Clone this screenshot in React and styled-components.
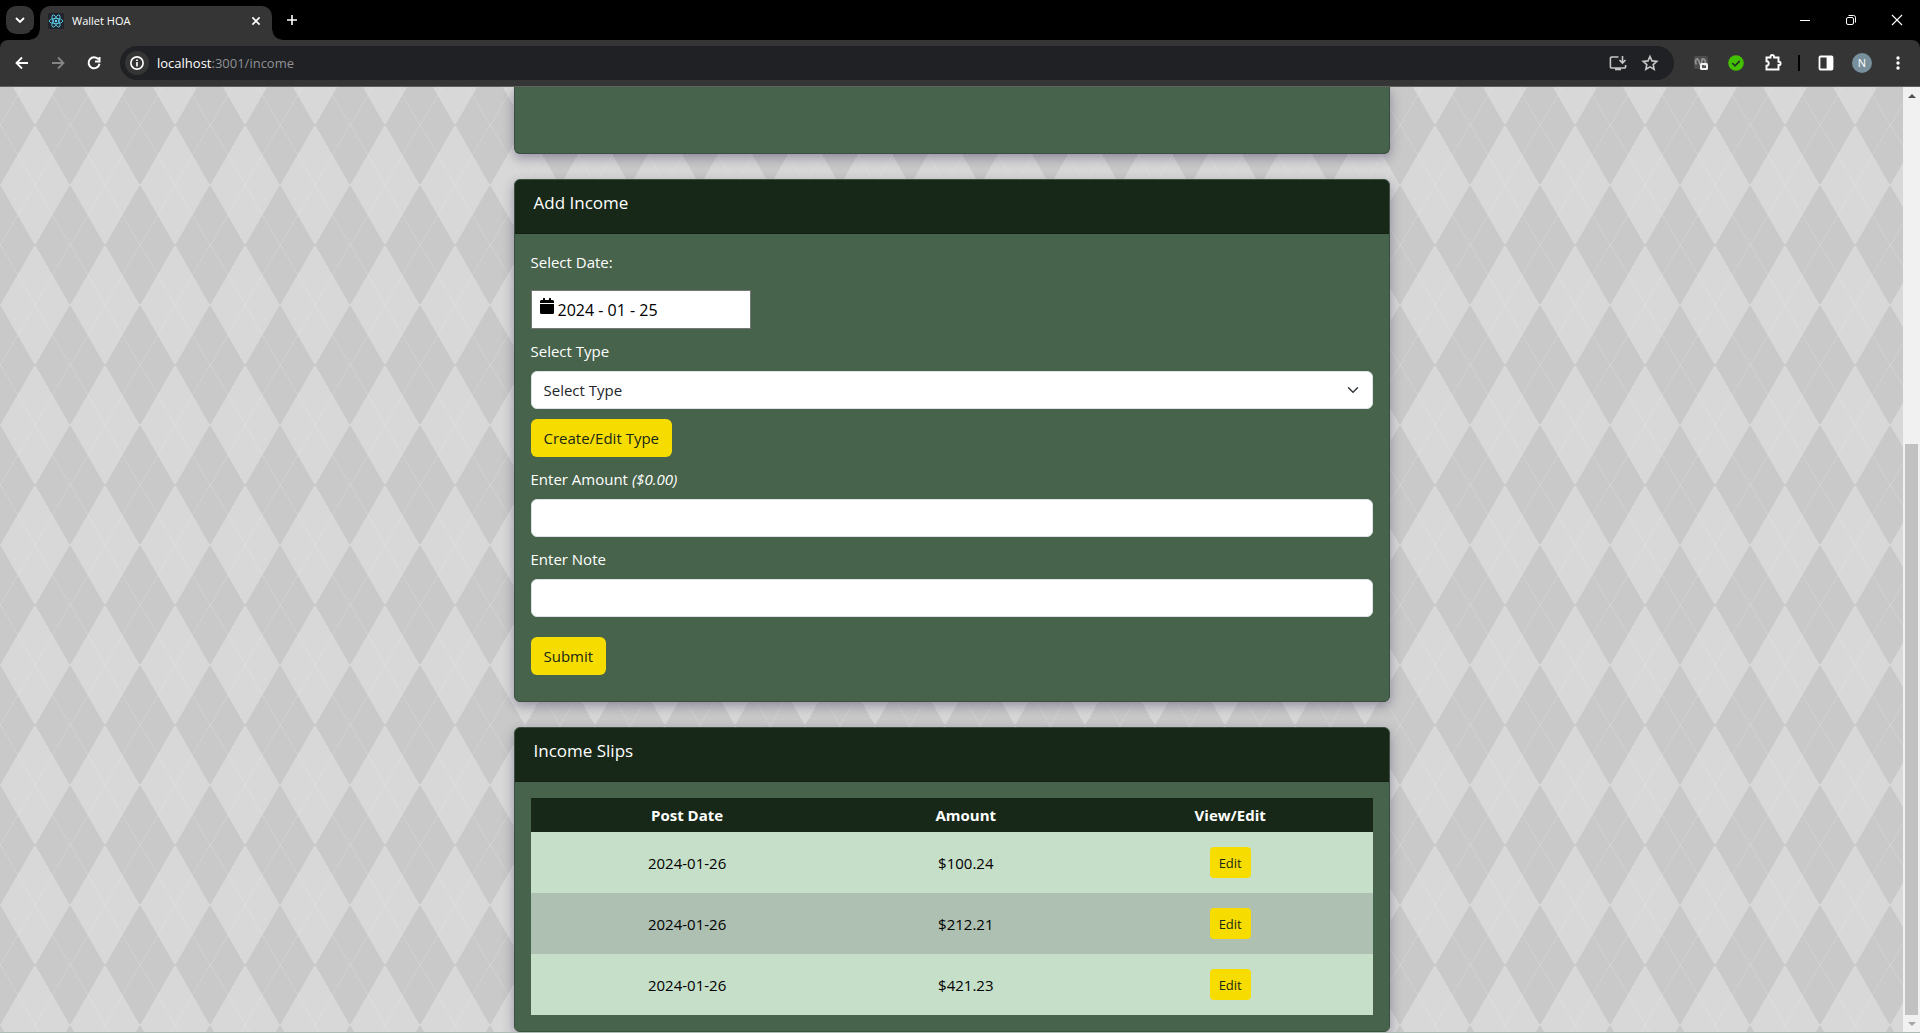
import React from "react";
import styled, { createGlobalStyle } from "styled-components";

const GlobalStyle = createGlobalStyle`
  *, *::before, *::after { box-sizing: border-box; }
  html, body, #root { height: 100%; }
  body {
    margin: 0;
    font-family: "Segoe UI", "Open Sans", "Noto Sans", sans-serif;
    font-size: 15px;
    line-height: 24px;
    color: #fff;
    background: #000;
    overflow: hidden;
  }
  button, input, select { font: inherit; }
`;

const Window = styled.div`
  display: grid;
  grid-template-rows: 40px 47px 1fr;
  height: 100vh;
  min-height: 600px;
`;

const TabStrip = styled.header`
  display: flex;
  align-items: flex-start;
  padding: 6px 0 0 6px;
  background: #000;
`;

const PlainButton = styled.button`
  display: grid;
  place-items: center;
  flex: none;
  width: ${(p) => p.$w || 28}px;
  height: 28px;
  padding: 0;
  border: 0;
  color: ${(p) => p.$color || "#fff"};
  background: transparent;
`;

const TabSearch = styled(PlainButton)`
  border-radius: 10px;
  background: #353535;
`;

const Tab = styled.div`
  position: relative;
  display: flex;
  align-items: center;
  gap: 8px;
  width: 232px;
  height: 34px;
  margin: 0 8px 0 6px;
  padding: 0 4px 4px 8px;
  border-radius: 10px 10px 0 0;
  background: #353535;
  font-size: 11px;
  font-weight: 500;
  &::before, &::after {
    content: "";
    position: absolute;
    bottom: 0;
    width: 10px;
    height: 10px;
  }
  &::before {
    left: -10px;
    background: radial-gradient(circle at 0 0, #000 9px, #353535 10px);
  }
  &::after {
    right: -10px;
    background: radial-gradient(circle at 100% 0, #000 9px, #353535 10px);
  }
`;

const TabTitle = styled.span`
  flex: 1;
  white-space: nowrap;
`;

const WindowButtons = styled.div`
  display: flex;
  margin-left: auto;
`;

const Toolbar = styled.nav`
  display: flex;
  align-items: center;
  padding: 0 8px 0 4px;
  border-bottom: 1px solid #5f5f5f;
  border-radius: 8px 8px 0 0;
  background: #353535;
`;

const Omnibox = styled.div`
  display: flex;
  align-items: center;
  flex: 1;
  height: 34px;
  margin: 0 11px 0 8px;
  padding: 0 8px 0 5px;
  border-radius: 17px;
  background: #202124;
  font-size: 13px;
`;

const SiteInfo = styled(PlainButton)`
  width: 24px;
  height: 24px;
  border-radius: 12px;
  background: #353535;
`;

const Url = styled.span`
  flex: 1;
  padding-left: 8px;
  color: #8f9195;
  b { font-weight: 400; color: #fff; }
`;

const Divider = styled.span`
  width: 2px;
  height: 16px;
  margin: 0 12px 0 7px;
  background: #000;
`;

const Avatar = styled.span`
  width: 20px;
  height: 20px;
  border-radius: 10px;
  background: #78909c;
  font-size: 11px;
  line-height: 19px;
  text-align: center;
`;

const Viewport = styled.div`
  display: flex;
  min-height: 0;
  border-bottom: 1px solid #aebcb6;
`;

const Page = styled.main`
  flex: 1;
  overflow: hidden;
  background-color: #d8d8d8;
  background-image:
    repeating-linear-gradient(120deg, rgba(255,255,255,.12), rgba(255,255,255,.12) 1px, transparent 1px, transparent 60px),
    repeating-linear-gradient(60deg, rgba(255,255,255,.12), rgba(255,255,255,.12) 1px, transparent 1px, transparent 60px),
    linear-gradient(60deg, rgba(0,0,0,.07) 25%, transparent 25%, transparent 75%, rgba(0,0,0,.07) 75%, rgba(0,0,0,.07)),
    linear-gradient(120deg, rgba(0,0,0,.07) 25%, transparent 25%, transparent 75%, rgba(0,0,0,.07) 75%, rgba(0,0,0,.07));
  background-size: 70px 120px;
  background-position: 0 38px;
`;

const Column = styled.div`
  display: flex;
  flex-direction: column;
  gap: 25px;
  width: 100%;
  max-width: 876px;
  margin: 0 auto;
`;

const Card = styled.section`
  border: 1px solid #3a4f3f;
  border-radius: 6px;
  background: #48634b;
  box-shadow: 0 4px 12px rgba(50, 40, 80, 0.4);
`;

const CardTail = styled(Card)`
  height: 67px;
  border-top: 0;
  border-radius: 0 0 6px 6px;
`;

const CardHeader = styled.h2`
  height: 54px;
  margin: 0;
  padding: 11px 19px;
  border-bottom: 1px solid #122013;
  border-radius: 5px 5px 0 0;
  background: #172818;
  font-size: 17px;
  font-weight: 400;
  line-height: 24px;
`;

const CardBody = styled.div`
  padding: 16px;
`;

const Form = styled.form`
  display: flex;
  flex-direction: column;
  align-items: flex-start;
  gap: 10px;
  padding-bottom: 10px;
`;

const Field = styled.div`
  display: flex;
  flex-direction: column;
  gap: ${(p) => p.$gap || 8}px;
  width: 100%;
`;

const Label = styled.label`
  font-weight: 500;
`;

const DateBox = styled.div`
  display: flex;
  align-items: center;
  gap: 4px;
  width: 220px;
  height: 39px;
  padding: 0 8px;
  border: 1px solid #767676;
  background: #fff;
  color: #000;
  svg { margin-bottom: 7px; }
`;

const DateInput = styled.input`
  flex: 1;
  min-width: 0;
  padding: 0;
  border: 0;
  background: transparent;
  color: #000;
  font-size: 16px;
`;

const TextInput = styled.input`
  width: 100%;
  height: 38px;
  padding: 6px 12px;
  border: 1px solid #dee2e6;
  border-radius: 6px;
  background: #fff;
  color: #212529;
`;

const SelectWrap = styled.div`
  display: grid;
  align-items: center;
  > * { grid-area: 1 / 1; }
  > svg { justify-self: end; margin-right: 12px; pointer-events: none; }
`;

const Select = styled.select`
  appearance: none;
  width: 100%;
  height: 38px;
  padding: 6px 36px 6px 12px;
  border: 1px solid #dee2e6;
  border-radius: 6px;
  background: #fff;
  color: #212529;
`;

const YellowButton = styled.button`
  height: ${(p) => (p.$small ? 31 : 38)}px;
  padding: ${(p) => (p.$small ? "0 9px" : "0 13px")};
  border: 0;
  border-radius: ${(p) => (p.$small ? 4 : 6)}px;
  background: #f7dc00;
  color: #172818;
  font-size: ${(p) => (p.$small ? 13 : 15)}px;
`;

const SubmitRow = styled.div`
  padding-top: 10px;
`;

const Table = styled.table`
  width: 100%;
  border-collapse: collapse;
  table-layout: fixed;
  text-align: center;
  color: #000;
  th {
    height: 34px;
    padding: 0;
    background: #172818;
    color: #fff;
    font-weight: 700;
  }
  th:nth-child(1) { width: 37.2%; }
  th:nth-child(2) { width: 29%; }
  td {
    height: 61px;
    padding: 0;
    vertical-align: middle;
  }
  tbody tr { background: #c6dfc9; }
  tbody tr:nth-child(even) { background: #aec0b1; }
`;

const Scrollbar = styled.div`
  display: flex;
  flex-direction: column;
  width: 17px;
  background: #f1f1f1;
`;

const ScrollArrow = styled.span`
  display: grid;
  place-items: center;
  height: 17px;
`;

const ScrollTrack = styled.span`
  flex: 340;
`;

const ScrollThumb = styled.span`
  flex: 571;
  margin: 0 2px;
  background: #c1c1c1;
`;

const Icon = ({ size = 20, w = 1.8, children }) => (
  <svg width={size} height={size} viewBox="0 0 20 20" fill="none" stroke="currentColor" strokeWidth={w}>
    {children}
  </svg>
);

const ReactLogo = () => (
  <svg width="16" height="16" viewBox="0 0 16 16" fill="none" stroke="#61dafb" strokeWidth="0.8">
    <rect width="16" height="16" rx="1.5" fill="#20232a" stroke="none" />
    <circle cx="8" cy="8" r="1.2" fill="#61dafb" stroke="none" />
    <ellipse cx="8" cy="8" rx="6.8" ry="2.6" />
    <ellipse cx="8" cy="8" rx="6.8" ry="2.6" transform="rotate(60 8 8)" />
    <ellipse cx="8" cy="8" rx="6.8" ry="2.6" transform="rotate(120 8 8)" />
  </svg>
);

const CalendarIcon = () => (
  <svg width="14" height="16" viewBox="0 0 14 16" fill="currentColor">
    <path d="M0 6h14v8.500a1.500 1.500 0 0 1-1.500 1.500h-11A1.500 1.500 0 0 1 0 14.500zM0 5V3.500A1.500 1.500 0 0 1 1.500 2H3V.4a.4.4 0 0 1 .4-.4h1.200a.4.400 0 0 1 .4.400V2h4V.4a.4.400 0 0 1 .4-.4h1.200a.4.400 0 0 1 .4.400V2h1.500A1.500 1.500 0 0 1 14 3.500V5z" />
  </svg>
);

const slips = [
  { date: "2024-01-26", amount: "$100.24" },
  { date: "2024-01-26", amount: "$212.21" },
  { date: "2024-01-26", amount: "$421.23" },
];

function BrowserBar() {
  return (
    <>
      <TabStrip>
        <TabSearch aria-label="Search tabs">
          <Icon size={16} w={2.4}><path d="M5 7.500l5 5 5-5" /></Icon>
        </TabSearch>
        <Tab>
          <ReactLogo />
          <TabTitle>Wallet HOA</TabTitle>
          <PlainButton $w={24} aria-label="Close tab">
            <Icon size={16} w={2}><path d="M5.500 5.500l9 9m0-9l-9 9" /></Icon>
          </PlainButton>
        </Tab>
        <PlainButton $w={24} aria-label="New tab">
          <Icon size={20} w={1.6}><path d="M10 5v10M5 10h10" /></Icon>
        </PlainButton>
        <WindowButtons>
          <PlainButton $w={46} aria-label="Minimize">
            <Icon w={1}><path d="M5 10.500h10" /></Icon>
          </PlainButton>
          <PlainButton $w={46} aria-label="Restore">
            <Icon w={1}>
              <rect x="5.500" y="7.500" width="7" height="7" rx="1.500" />
              <path d="M7.500 5.500h5a2 2 0 0 1 2 2v5" />
            </Icon>
          </PlainButton>
          <PlainButton $w={46} aria-label="Close">
            <Icon w={1.1}><path d="M5 5l10 10M15 5L5 15" /></Icon>
          </PlainButton>
        </WindowButtons>
      </TabStrip>
      <Toolbar>
        <PlainButton $w={36} aria-label="Back">
          <Icon><path d="M16 10H5M10 4.500L4.500 10l5.500 5.500" /></Icon>
        </PlainButton>
        <PlainButton $w={36} $color="#858585" aria-label="Forward">
          <Icon><path d="M4 10h11M10 4.500l5.500 5.500-5.500 5.500" /></Icon>
        </PlainButton>
        <PlainButton $w={36} aria-label="Reload">
          <Icon w={2}><path d="M14.500 6.500A5.500 5.500 0 1 0 15.500 10.800M15.500 4v4.500H11" /></Icon>
        </PlainButton>
        <Omnibox>
          <SiteInfo aria-label="Site information">
            <Icon size={18} w={1.8}>
              <circle cx="10" cy="10" r="6.800" />
              <path d="M10 9v5M10 6v1.800" />
            </Icon>
          </SiteInfo>
          <Url><b>localhost</b>:3001/income</Url>
          <PlainButton $w={32} $color="#c7c7c7" aria-label="Install">
            <Icon w={1.6}>
              <path d="M10.500 4H3.600a1.200 1.200 0 0 0-1.200 1.200v8.600A1.200 1.200 0 0 0 3.600 15h12.800a1.200 1.200 0 0 0 1.200-1.200V12M14.500 3v6.500M11.500 7l3 3 3-3" />
              <path d="M7 16.200h6" strokeWidth="2.200" />
            </Icon>
          </PlainButton>
          <PlainButton $w={32} $color="#c7c7c7" aria-label="Bookmark">
            <Icon w={1.6}>
              <path d="M10 3.500l2 4.400 4.800.500-3.600 3.200 1 4.700-4.200-2.400-4.200 2.400 1-4.700-3.600-3.200 4.800-.500z" />
            </Icon>
          </PlainButton>
        </Omnibox>
        <PlainButton $w={32} aria-label="Recorder extension">
          <svg width="16" height="16" viewBox="0 0 16 16">
            <rect x="1" y="1" width="14" height="13" rx="2" fill="#4d4d4d" />
            <path d="M3.500 9.500c-1.800-2.500-1-5.500.8-5.500s1.900 6 3.600 6-.2-6 2-6 3.200 2.500 2 4.500" fill="none" stroke="#929292" strokeWidth="1.800" />
            <rect x="7" y="8" width="8" height="7" rx="1.500" fill="#f1f1f1" />
            <path d="M9 10h2.500v1l1.500-1v3h-1.500H9z" fill="#555" />
          </svg>
        </PlainButton>
        <PlainButton $w={38} aria-label="Checker extension">
          <svg width="16" height="16" viewBox="0 0 16 16">
            <circle cx="8" cy="8" r="7.800" fill="#43c000" />
            <path d="M4.200 8l2.800 2.800 4.800-5" fill="none" stroke="#20302a" strokeWidth="1.700" />
          </svg>
        </PlainButton>
        <PlainButton $w={36} aria-label="Extensions">
          <Icon w={1.9}>
            <path d="M3.500 4.500h4V3.800a1.800 1.800 0 0 1 3.600 0v.700h4.400v4.300h.500a1.600 1.600 0 0 1 0 3.200h-.500v4.500h-12v-3.800a2.200 2.200 0 0 0 0-4.400z" />
          </Icon>
        </PlainButton>
        <Divider />
        <PlainButton $w={28} aria-label="Side panel">
          <Icon w={1.8}>
            <rect x="3.500" y="3.500" width="13" height="13" rx="1" />
            <path d="M11.500 4h4.500v12h-4.500z" fill="currentColor" />
          </Icon>
        </PlainButton>
        <PlainButton $w={44} aria-label="Profile"><Avatar>N</Avatar></PlainButton>
        <PlainButton $w={28} aria-label="Menu">
          <svg width="4" height="16" viewBox="0 0 4 16" fill="currentColor">
            <circle cx="2" cy="3" r="1.700" /><circle cx="2" cy="8" r="1.700" /><circle cx="2" cy="13" r="1.700" />
          </svg>
        </PlainButton>
      </Toolbar>
    </>
  );
}

function AddIncome() {
  return (
    <Card>
      <CardHeader>Add Income</CardHeader>
      <CardBody>
        <Form onSubmit={(e) => e.preventDefault()}>
          <Field $gap={16}>
            <Label htmlFor="date">Select Date:</Label>
            <DateBox>
              <CalendarIcon />
              <DateInput id="date" defaultValue="2024 - 01 - 25" />
            </DateBox>
          </Field>
          <Field>
            <Label htmlFor="type">Select Type</Label>
            <SelectWrap>
              <Select id="type"><option>Select Type</option></Select>
              <svg width="16" height="12" viewBox="0 0 16 16" fill="none" stroke="#343a40" strokeWidth="2" strokeLinecap="round" strokeLinejoin="round">
                <path d="M2 5l6 6 6-6" />
              </svg>
            </SelectWrap>
          </Field>
          <YellowButton type="button">Create/Edit Type</YellowButton>
          <Field>
            <Label htmlFor="amount">Enter Amount <em>($0.00)</em></Label>
            <TextInput id="amount" />
          </Field>
          <Field>
            <Label htmlFor="note">Enter Note</Label>
            <TextInput id="note" />
          </Field>
          <SubmitRow><YellowButton type="submit">Submit</YellowButton></SubmitRow>
        </Form>
      </CardBody>
    </Card>
  );
}

function IncomeSlips() {
  return (
    <Card>
      <CardHeader>Income Slips</CardHeader>
      <CardBody>
        <Table>
          <thead>
            <tr><th>Post Date</th><th>Amount</th><th>View/Edit</th></tr>
          </thead>
          <tbody>
            {slips.map((s) => (
              <tr key={s.amount}>
                <td>{s.date}</td>
                <td>{s.amount}</td>
                <td><YellowButton $small type="button">Edit</YellowButton></td>
              </tr>
            ))}
          </tbody>
        </Table>
      </CardBody>
    </Card>
  );
}

export default function App() {
  return (
    <Window>
      <GlobalStyle />
      <BrowserBar />
      <Viewport>
        <Page>
          <Column>
            <CardTail />
            <AddIncome />
            <IncomeSlips />
          </Column>
        </Page>
        <Scrollbar>
          <ScrollArrow>
            <svg width="8" height="4" viewBox="0 0 8 4"><path d="M0 4l4-4 4 4z" fill="#505050" /></svg>
          </ScrollArrow>
          <ScrollTrack />
          <ScrollThumb />
          <ScrollArrow>
            <svg width="8" height="4" viewBox="0 0 8 4"><path d="M0 0l4 4 4-4z" fill="#a3a3a3" /></svg>
          </ScrollArrow>
        </Scrollbar>
      </Viewport>
    </Window>
  );
}
